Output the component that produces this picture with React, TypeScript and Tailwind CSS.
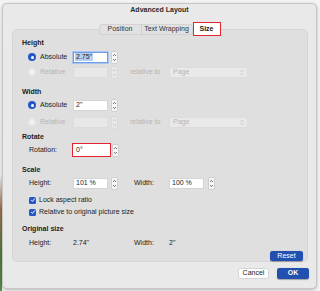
import React from "react";

const font = { fontFamily: '"Liberation Sans", Arial, sans-serif' };

function Stepper({ disabled = false }: { disabled?: boolean }) {
  const c = disabled ? "#c4c4c4" : "#555";
  return (
    <div className={`w-[7px] h-[13px] rounded-[2px] border ${disabled ? "border-[#dadada] bg-[#e8e8e8]" : "border-[#cfcfcf] bg-[#f7f7f7]"} flex items-center justify-center`}>
      <svg width="5" height="11" viewBox="0 0 5 11">
        <path d="M1 4 L2.5 2.3 L4 4" fill="none" stroke={c} strokeWidth="0.8" />
        <path d="M1 7 L2.5 8.7 L4 7" fill="none" stroke={c} strokeWidth="0.8" />
      </svg>
    </div>
  );
}

function Radio({ on }: { on: boolean }) {
  return on ? (
    <div className="w-[8px] h-[8px] rounded-full bg-[#2457c5] flex items-center justify-center">
      <div className="w-[3px] h-[3px] rounded-full bg-white" />
    </div>
  ) : (
    <div className="w-[8px] h-[8px] rounded-full bg-[#f1f1f1] border border-[#e2e2e2]" />
  );
}

function Check() {
  return (
    <div className="w-[7px] h-[7px] rounded-[1.5px] bg-[#2457c5] flex items-center justify-center">
      <svg width="6" height="6" viewBox="0 0 6 6">
        <path d="M1.2 3.1 L2.5 4.4 L4.9 1.4" fill="none" stroke="white" strokeWidth="1" />
      </svg>
    </div>
  );
}

function Heading({ children, mt }: { children: React.ReactNode; mt: string }) {
  return (
    <div className={`${mt} h-[12px] flex items-center pl-[9px] font-bold text-[7px] text-[#222]`}>{children}</div>
  );
}

function Select() {
  return (
    <div className="w-[79px] h-[11px] rounded-[2px] bg-[#e9e9e9] border border-[#dcdcdc] flex items-center justify-between pl-[3px] pr-[3px] text-[#b5b5b5]">
      <span>Page</span>
      <svg width="4" height="7" viewBox="0 0 4 7">
        <path d="M0.7 2.6 L2 1.2 L3.3 2.6" fill="none" stroke="#b8b8b8" strokeWidth="0.7" />
        <path d="M0.7 4.4 L2 5.8 L3.3 4.4" fill="none" stroke="#b8b8b8" strokeWidth="0.7" />
      </svg>
    </div>
  );
}

function RelativeRow({ mt }: { mt: string }) {
  return (
    <div className={`${mt} h-[14px] flex items-center pl-[15px]`}>
      <Radio on={false} />
      <span className="ml-[4px] w-[33px] text-[#b4b4b4]">Relative</span>
      <div className="w-[35px] h-[11px] bg-[#e8e8e8] border border-[#dcdcdc]" />
      <div className="ml-[3px]"><Stepper disabled /></div>
      <span className="ml-[12px] w-[39px] text-[#b4b4b4]">relative to</span>
      <Select />
    </div>
  );
}

export default function App() {
  return (
    <div
      className="w-[320px] h-[291px] flex overflow-hidden bg-[#f3f3f3] text-[7px] text-[#222]"
      style={font}
    >
      <div className="w-[2px] h-full bg-[linear-gradient(180deg,#f4f4f4_0%,#efefef_60%,#9a6b4c_72%,#4d7a38_88%,#5a8a40_100%)]" />
      <div className="pt-[3px]">
      <div className="w-[315px] h-[286px] rounded-[5px] border border-[#c6c6c6] bg-[#e9e9e9] shadow-[0_1px_3px_rgba(0,0,0,0.25)] flex flex-col px-[9px]">
        {/* title */}
        <div className="h-[12px] flex items-center justify-center font-bold text-[7px] text-[#2a2a2a]">Advanced Layout</div>
        {/* tabs */}
        <div className="relative z-10 mt-[6px] h-[14px] flex items-center justify-center">
          <div className="flex items-center h-[11px] rounded-[3px] bg-[#e1e1e1] border border-[#d3d3d3] text-[#333]">
            <div className="w-[42px] h-full flex items-center justify-center border-r border-[#cdcdcd]">Position</div>
            <div className="w-[50px] h-full flex items-center justify-center">Text Wrapping</div>
          </div>
          <div className="w-[28px] h-[14px] bg-white border border-[#e4252f] flex items-center justify-center font-bold text-[#222]">Size</div>
        </div>
        {/* panel */}
        <div className="-mt-[7px] w-[296px] h-[233px] rounded-[5px] bg-[#dfdfdf] border border-[#d6d6d6] flex flex-col">
          <Heading mt="mt-[7px]">Height</Heading>
          <div className="mt-[1px] h-[14px] flex items-center pl-[15px]">
            <Radio on />
            <span className="ml-[4px] w-[33px]">Absolute</span>
            <div className="w-[35px] h-[11px] bg-white border border-[#6e9de6] shadow-[0_0_0_1px_#a9c6f1] flex items-center pl-[1px]">
              <span className="bg-[#b3cff5] px-[1px] leading-[8px]">2.75"</span>
            </div>
            <div className="ml-[3px]"><Stepper /></div>
          </div>
          <RelativeRow mt="mt-[1px]" />
          <Heading mt="mt-[7px]">Width</Heading>
          <div className="h-[14px] flex items-center pl-[15px]">
            <Radio on />
            <span className="ml-[4px] w-[33px]">Absolute</span>
            <div className="w-[35px] h-[11px] bg-white border border-[#d4d4d4] flex items-center pl-[2px]">2"</div>
            <div className="ml-[3px]"><Stepper /></div>
          </div>
          <RelativeRow mt="mt-[3px]" />
          <Heading mt="mt-[2px]">Rotate</Heading>
          <div className="h-[14px] flex items-center pl-[16px]">
            <span className="w-[43px]">Rotation:</span>
            <div className="w-[39px] h-[14px] bg-white border border-[#e4252f] flex items-center pl-[3px]">0°</div>
            <div className="ml-[1px]"><Stepper /></div>
          </div>
          <Heading mt="mt-[7px]">Scale</Heading>
          <div className="h-[14px] flex items-center pl-[16px]">
            <span className="w-[44px]">Height:</span>
            <div className="w-[35px] h-[11px] bg-white border border-[#d4d4d4] flex items-center pl-[2px]">101 %</div>
            <div className="ml-[3px]"><Stepper /></div>
            <span className="ml-[16px] w-[35px]">Width:</span>
            <div className="w-[35px] h-[11px] bg-white border border-[#d4d4d4] flex items-center pl-[2px]">100 %</div>
            <div className="ml-[4px]"><Stepper /></div>
          </div>
          <div className="mt-[4px] h-[12px] flex items-center pl-[16px]">
            <Check />
            <span className="ml-[3px]">Lock aspect ratio</span>
          </div>
          <div className="h-[12px] flex items-center pl-[16px]">
            <Check />
            <span className="ml-[3px]">Relative to original picture size</span>
          </div>
          <Heading mt="mt-[5px]">Original size</Heading>
          <div className="mt-[1px] h-[14px] flex items-center pl-[16px]">
            <span className="w-[44px]">Height:</span>
            <span className="w-[61px]">2.74"</span>
            <span className="w-[35px]">Width:</span>
            <span>2"</span>
          </div>
          <div className="mt-[1px] flex justify-end pr-[4px]">
            <div className="w-[33px] h-[10px] rounded-[2.5px] bg-[#2250b0] text-white flex items-center justify-center shadow-[0_0.5px_1px_rgba(0,0,0,0.3)]">Reset</div>
          </div>
        </div>
        {/* footer */}
        <div className="mt-[6px] flex justify-end gap-[8px] -mr-[2px]">
          <div className="w-[31px] h-[11px] rounded-[2.5px] bg-white border border-[#d4d4d4] flex items-center justify-center text-[#222]">Cancel</div>
          <div className="w-[32px] h-[11px] rounded-[2.5px] bg-[#2250b0] text-white font-bold flex items-center justify-center shadow-[0_0.5px_1px_rgba(0,0,0,0.3)]">OK</div>
        </div>
      </div>
      </div>
    </div>
  );
}
